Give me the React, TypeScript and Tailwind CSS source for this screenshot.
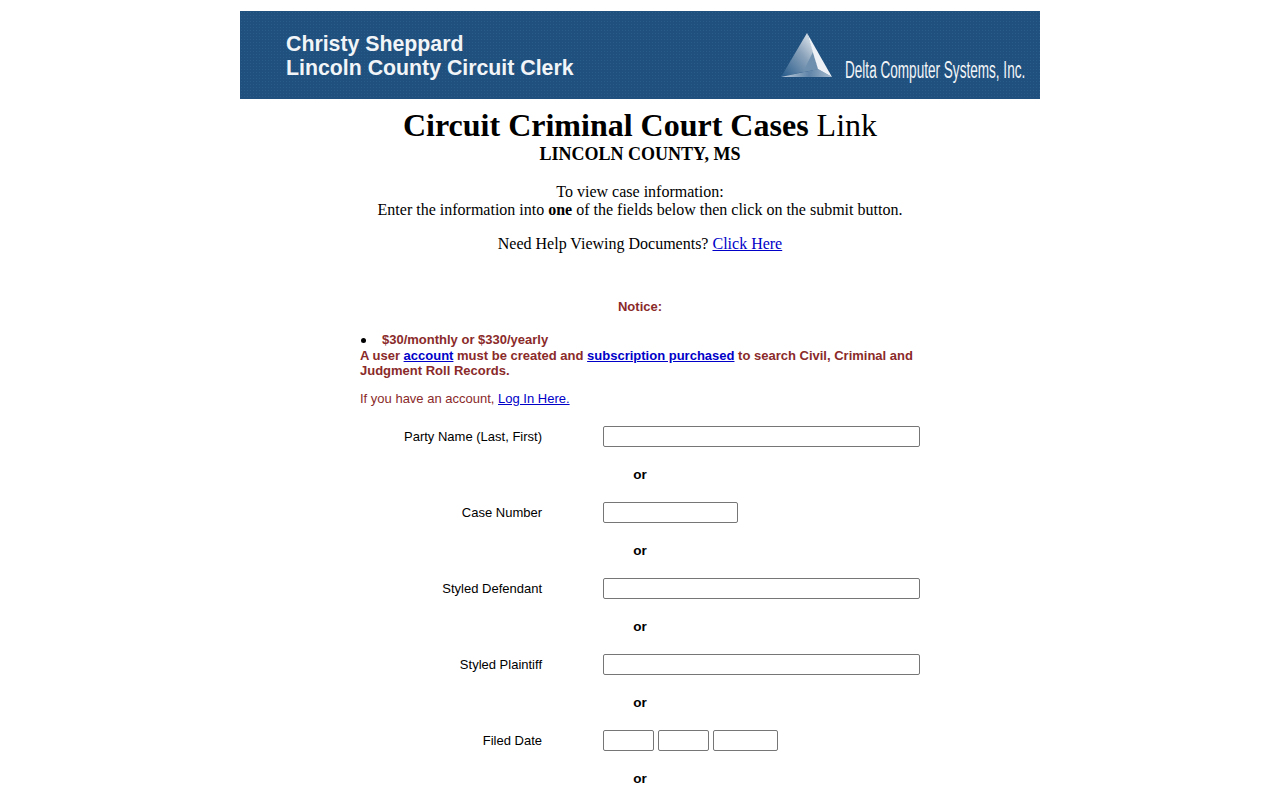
function Row({ label, children }: { label: string; children: React.ReactNode }) {
  return (
    <div className="flex h-[21px] items-center">
      <div className="w-[182px] text-right text-[13px] leading-[16px] text-black">{label}</div>
      <div className="ml-[61px] flex gap-1">{children}</div>
    </div>
  );
}

function Or() {
  return <div className="flex h-[55px] items-center justify-center text-[13.5px] font-bold leading-[16px] text-black">or</div>;
}

const input = "h-[21px] rounded-[2px] border border-[#767676] bg-white";

export default function App() {
  return (
    <div className="min-h-[800px] bg-white pt-[11px] font-['Liberation_Serif',serif] text-black">
      <header className="mx-auto flex h-[88px] w-[800px] items-stretch justify-between bg-[#20507d] bg-[radial-gradient(#2a5c8a_1px,transparent_1px)] bg-[length:3px_3px]">
        <div className="pl-[46px] pt-[21px] font-['Liberation_Sans',sans-serif] text-[21.3px] font-bold leading-[24px] text-[#f2f5f8]">
          <div>Christy Sheppard</div>
          <div>Lincoln County Circuit Clerk</div>
        </div>
        <div className="relative w-[270px]">
          <svg className="absolute left-[5px] top-[14px]" width="70" height="60" viewBox="0 0 70 60">
            <defs>
              <linearGradient id="tri" x1="0" y1="1" x2="1" y2="0">
                <stop offset="0.05" stopColor="#2c5f8e" />
                <stop offset="0.55" stopColor="#8ba3bb" />
                <stop offset="0.85" stopColor="#d8e0e8" />
              </linearGradient>
              <linearGradient id="base" x1="0" y1="0" x2="1" y2="0">
                <stop offset="0" stopColor="#c4d2e0" />
                <stop offset="0.55" stopColor="#5f84a8" />
                <stop offset="1" stopColor="#a9bccf" />
              </linearGradient>
            </defs>
            <polygon points="32,8 6,52 28,47 43,44 38,26" fill="url(#tri)" />
            <polygon points="38,27 43,44 28,47" fill="#6e8fae" />
            <polygon points="6,52 43,44 57,52" fill="url(#base)" />
            <polygon points="32,8 57,52 43,44" fill="#eef2f6" />
          </svg>
          <span className="absolute left-[75px] top-[47px] origin-left scale-x-[0.59] whitespace-nowrap font-['Liberation_Sans',sans-serif] text-[23px] leading-[24px] text-[#f2f5f8]">
            Delta Computer Systems, Inc.
          </span>
        </div>
      </header>

      <main className="mx-auto w-[560px]">
        <h1 className="mt-[8px] text-center text-[32px] leading-[37px]">
          <b>Circuit Criminal Court Cases</b> Link
        </h1>
        <h2 className="text-center text-[18px] font-bold leading-[20px]">LINCOLN COUNTY, MS</h2>

        <p className="mt-[19px] text-center text-[16px] leading-[18px]">
          To view case information:
          <br />
          Enter the information into <b>one</b> of the fields below then click on the submit button.
        </p>
        <p className="mt-[16px] text-center text-[16px] leading-[18px]">
          Need Help Viewing Documents? <a href="#" className="text-[#0000c8] underline">Click Here</a>
        </p>

        <div className="mt-[46px] font-['Liberation_Sans',sans-serif] text-[13px] leading-[16px] text-[#8a2a2a]">
          <p className="text-center font-bold">Notice:</p>
          <ul className="mt-[17px] font-bold">
            <li className="flex items-center">
              <span className="ml-[1px] mr-[16px] h-[5px] w-[5px] rounded-full bg-black" />
              <span>$30/monthly or $330/yearly</span>
            </li>
          </ul>
          <p className="font-bold leading-[15px]">
            A user <a href="#" className="text-[#0000c8] underline">account</a> must be created and{" "}
            <a href="#" className="text-[#0000c8] underline">subscription purchased</a> to search Civil, Criminal and Judgment Roll Records.
          </p>
          <p className="mt-[13px]">
            If you have an account, <a href="#" className="text-[#0000c8] underline">Log In Here.</a>
          </p>
        </div>

        <form className="mt-[19px] font-['Liberation_Sans',sans-serif]">
          <Row label="Party Name (Last, First)"><input className={`${input} w-[317px]`} /></Row>
          <Or />
          <Row label="Case Number"><input className={`${input} w-[135px]`} /></Row>
          <Or />
          <Row label="Styled Defendant"><input className={`${input} w-[317px]`} /></Row>
          <Or />
          <Row label="Styled Plaintiff"><input className={`${input} w-[317px]`} /></Row>
          <Or />
          <Row label="Filed Date">
            <input className={`${input} w-[51px]`} />
            <input className={`${input} w-[51px]`} />
            <input className={`${input} w-[65px]`} />
          </Row>
          <Or />
        </form>
      </main>
    </div>
  );
}
